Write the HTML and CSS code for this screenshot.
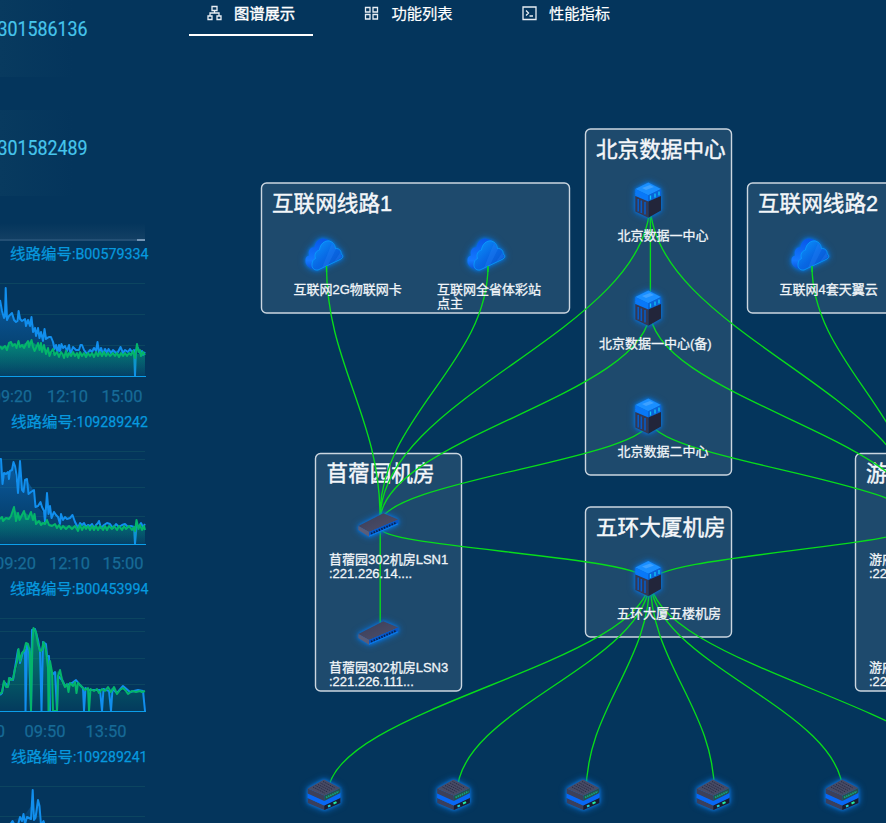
FILE: index.html
```html
<!DOCTYPE html>
<html lang="zh-CN">
<head>
<meta charset="utf-8">
<title>图谱展示</title>
<link rel="stylesheet" href="styles.css">
</head>
<body>
<div class="page">
  <aside class="sidebar">
    <div class="stat stat-first"><svg width="100" height="24"><text class="num" x="-2.5" y="22" textLength="90" lengthAdjust="spacingAndGlyphs">301586136</text></svg></div>
    <div class="stat"><svg width="100" height="24"><text class="num" x="-2.5" y="22" textLength="90" lengthAdjust="spacingAndGlyphs">301582489</text></svg></div>
    <div class="scroller"><i></i></div>

    <svg class="chart" width="150" height="167" viewBox="0 241 150 167">
      <defs>
        <linearGradient id="blueFill" x1="0" y1="0" x2="0" y2="1"><stop offset="0" stop-color="#1080df" stop-opacity=".6"/><stop offset="1" stop-color="#0a5a9c" stop-opacity=".12"/></linearGradient>
        <linearGradient id="greenFill" x1="0" y1="0" x2="0" y2="1"><stop offset="0" stop-color="#04a878" stop-opacity=".7"/><stop offset="1" stop-color="#04a878" stop-opacity=".05"/></linearGradient>
      </defs>
      <text class="line-name" x="10" y="259" textLength="62" lengthAdjust="spacingAndGlyphs">线路编号</text><text class="line-name" x="72" y="259" textLength="76.500" lengthAdjust="spacingAndGlyphs">:B00579334</text>
      <path class="grid" d="M0 283.5H145M0 314.5H145M0 345.5H145"/>
      <path class="area-blue" d="M0 300L4 318L6 288L8 320L12 313L17 322L19 311L22 321L31 319L38 334L44 335L51 337L57 347L66 348L81 352L97 346L110 350L134 351L145 353V376H0Z"/>
      <path class="blue" d="M0 300L2 311L4 318L5 316L5.7 288L7 320L9 316L12 313L14 320L16 322L17.5 321L18.6 311L20 319L22 321L25 319L26 326L28 320L30 326L31.500 317L33 332L35 328L36 336L38 328L39.500 338L41 332L43 341L44.500 329L46 339L49 337L51 337L53 342L54.500 349L56 345L57.500 352L59 345L60 351L61.500 344L63 348L65 346L67 351L69 345L70.500 354L73 347L76 350L79 350L80.500 345L82 345L84 350L87 354L90 350L92 352L94 348L96 351L97.500 342L99 353L101 348L103 354L105 349L107 353L108.500 349L111 353L113 350L116 353L118 352L120.500 347L123 353L125 350L128 352L130 349L132 352L134 350L135 376L136 350L138 348L140 353L142 351L143 355L145 352"/>
      <path class="area-green" d="M0 346L7 346L11 342L18 346L31 341L42 349L52 353L66 354L145 354V376H0Z"/>
      <path class="green" d="M0 346L2 349L5 346L7 350L9 343L11 342L12.500 346L15 344L16.500 348L18.500 341L20 347L22 345L24 348L26 344L28 341L29 347L31.500 340L33 347L34.500 351L36 348L38 343L39.500 350L41 343L42 352L44 345L46 354L48 348L49.500 356L51 352L53 349L54.500 355L57 352L59 357L61 352L62.500 354L64 358L66 351L67.500 357L69 353L71 356L73 352L75 356L77 353L78.500 358L80 352L82 356L84 353L86 357L88 353L90 356L92 353L94 357L96 352L98 356L100 352L102 356L104 352L106 356L108 353L110 356L113 353L115 356L117 353L119 357L121 353L123 356L125 353L127 356L129 353L131 355L133 351L135 358L137 344L138.500 352L140 350L141 356L143 352L145 355"/>
      <path class="axis" d="M0 376.500H146"/>
      <text class="tick" x="-8" y="401.800" textLength="40" lengthAdjust="spacingAndGlyphs">09:20</text><text class="tick" x="47" y="401.800" textLength="41" lengthAdjust="spacingAndGlyphs">12:10</text><text class="tick" x="101.500" y="401.800" textLength="41" lengthAdjust="spacingAndGlyphs">15:00</text>
    </svg>

    <svg class="chart" width="150" height="168" viewBox="0 408 150 168">
      <text class="line-name" x="11" y="426.500" textLength="62" lengthAdjust="spacingAndGlyphs">线路编号</text><text class="line-name" x="73" y="426.500" textLength="75" lengthAdjust="spacingAndGlyphs">:109289242</text>
      <path class="grid" d="M0 451.500H145M0 459.500H145M0 487.500H145M0 516.500H145"/>
      <path class="area-blue" d="M0 459L3 483L5 472L9 478L13 463L18 492L20 461L23 491L26 479L34 491L36 506L45 514L47 493L50 512L62 518L73 518L80 526L145 527V544H0Z"/>
      <path class="blue" d="M0 459L1 459L2.500 484L4 473L6 474L8 472L9 479L10 471L12 470L13.500 462L15 466L16.500 475L18 493L20 461L22 490L23.500 492L25 480L27 479L28.500 494L31 492L34 490L35.500 507L38 506L40.500 502L42 507L44 511L45 522L47 493L48.500 514L50 506L51.500 518L54 512L56 515L58 517L60 524L61 514L63 520L65 517L67 519L70 518L72.500 515L75 522L78 528L80 523L82 525L84 523L86 527L88 525L90 526L92 524L94 528L96 525L98 523L99 521L101 528L104 525L107 523L110 524L113 528L116 524L119 527L122 525L125 524L128 527L131 526L134 527L135 544L136.500 527L139 526L141 523L143 527L145 524"/>
      <path class="area-green" d="M0 518L11 517L14 509L20 516L24 512L36 520L54 525L145 528V544H0Z"/>
      <path class="green" d="M0 519L2 517L3 521L6 518L9 519L11 516L14 507L16 521L18 513L19.500 520L22 515L24 511L26 519L28 519L31 512L33 520L34.500 514L36 524L39 521L41 525L43 523L45 524L47 520L49 525L52 526L55 524L57 528L59 525L61 529L63 526L66 529L69 526L72 529L75 526L78 531L80 525L82 530L84 526L86 529L88 526L90 530L92 526L94 530L96 526L98 530L100 526L103 530L105 526L107 530L109 526L112 529L114 526L117 530L119 526L122 530L124 526L126 529L129 526L132 530L134 527L135 531L136.500 520L138.500 529L140 525L142 530L144 526L145 530"/>
      <path class="axis" d="M0 544.500H146"/>
      <text class="tick" x="-5" y="569.300" textLength="41" lengthAdjust="spacingAndGlyphs">09:20</text><text class="tick" x="49" y="569.300" textLength="41" lengthAdjust="spacingAndGlyphs">12:10</text><text class="tick" x="102.500" y="569.300" textLength="41" lengthAdjust="spacingAndGlyphs">15:00</text>
    </svg>

    <svg class="chart" width="150" height="167" viewBox="0 576 150 167">
      <text class="line-name" x="10" y="594" textLength="62" lengthAdjust="spacingAndGlyphs">线路编号</text><text class="line-name" x="72" y="594" textLength="76.500" lengthAdjust="spacingAndGlyphs">:B00453994</text>
      <path class="grid" d="M0 618.500H145M0 631.500H145M0 658.500H145M0 684.500H145"/>
      <path class="area-green" d="M0 694L8 685L13 679L20 658L26 645L31 648L34 629L40 651L44 641L52 673L60 671L66 685L80 686L94 691L145 692V711H0Z"/>
      <path class="blue" d="M0 695L2 693L4 682L8 686L10 678L13 680L15 668L18 650L20 663L23 652L25 650L25.500 711L27 644L29 650L31 711L32 630L35 629L38 640L40 651L41.500 711L43 642L46 644L47 656L49 656L50 711M52 675L55 672L57 711L58 676L62 680L65 686L72 683L76 680L80 685L83 688L84 711L85.500 688L89 690L100 690L102 711L103.500 689L109 691L111 711L112.500 689L117 693L123 686L130 692L138 690L143 691L145 711"/>
      <path class="green" d="M0 694L2 692L4 681L6 687L8 687L9 678L11 680L13 679L15 669L17 662L18.500 649L20 661L22 653L24 651L26 643L28 644L30 652L31 711L32.500 641L33.500 628L36 632L38 644L40 651L42 650L43.500 642L46 650L48 668L48.500 711L50 661L52 672L53 711H57L58 676L60 670L62 680L65 687L67 684L68.500 692L70 683L73 686L75 682L76.500 693L78 683L82 687L85 690L88 688L89 711L90.500 689L94 691L97 689L99 693L102 689L105 691L108 687L111 692L114 687L117 694L120 690L123 688L126 691L128 694L132 691L136 692L140 691L142 692L145 691"/>
      <path class="axis" d="M0 711.500H146"/>
      <text class="tick" x="-36" y="737" textLength="41" lengthAdjust="spacingAndGlyphs">05:50</text><text class="tick" x="24.500" y="737" textLength="41" lengthAdjust="spacingAndGlyphs">09:50</text><text class="tick" x="85.500" y="737" textLength="41" lengthAdjust="spacingAndGlyphs">13:50</text>
    </svg>

    <svg class="chart" width="150" height="80" viewBox="0 743 150 80">
      <text class="line-name" x="11" y="761.500" textLength="62" lengthAdjust="spacingAndGlyphs">线路编号</text><text class="line-name" x="73" y="761.500" textLength="74.500" lengthAdjust="spacingAndGlyphs">:109289241</text>
      <path class="grid" d="M0 786.500H145M0 816.500H145"/>
      <path class="area-blue" d="M10 824L13 820L24 816L32 805L33 790L35 820L38 800L40 823Z"/>
      <path class="blue" d="M10 825L12.500 821L15 826L18 825L20 817L22 821L23.500 814L25 824L27 817L29 818L31 819L32.700 790L34 820L35.500 818L38 800L39.500 806L41 825L43.500 821L45 826"/>
    </svg>
  </aside>

  <main class="main">
    <nav class="tabs">
      <a class="tab active"><svg class="ico" width="15" height="16" viewBox="0 0 15 16"><path d="M5 1.500h5v4H5zM1 11h4v3.500H1zM10 11h4v3.500h-4zM7.500 5.500V8M3 11V8h9v3"/></svg><span>图谱展示</span></a>
      <a class="tab"><svg class="ico" width="15" height="16" viewBox="0 0 15 16"><path d="M1.500 2.500h4.500v4.500H1.500zM9 2.500h4.500v4.500H9zM1.500 9.500h4.500V14H1.500zM9 9.500h4.500V14H9z"/></svg><span>功能列表</span></a>
      <a class="tab"><svg class="ico" width="15" height="16" viewBox="0 0 15 16"><path d="M1 2h13v12.500H1zM4 5.500l2.500 2.500L4 10.500M7.500 11h3.500"/></svg><span>性能指标</span></a>
    </nav>

    <svg class="topology" width="697" height="787" viewBox="189 36 697 787">
      <defs>
        <linearGradient id="cloudFace" x1="0" y1="0" x2="1" y2="1"><stop offset="0" stop-color="#0a98ff"/><stop offset=".5" stop-color="#0868e4"/><stop offset="1" stop-color="#0b50c8"/></linearGradient>
        <linearGradient id="cloudSide" x1="0" y1="0" x2="0" y2="1"><stop offset="0" stop-color="#0757e8"/><stop offset=".7" stop-color="#1479ff"/><stop offset="1" stop-color="#0c50d4"/></linearGradient>
        <linearGradient id="deckTop" x1="0" y1="0" x2="1" y2="1"><stop offset="0" stop-color="#3a3d58"/><stop offset="1" stop-color="#50506a"/></linearGradient>
        <g id="cloud" class="glow">
          <path fill="url(#cloudSide)" d="M10 32.500C6 31 1 29 1.500 23.500C1.500 20 3 19 5 18.500C3.500 13 7 10 10.500 10C11 5 15 1 19.500 1.500C24 2 27 4 28 6L14 33Z"/>
          <path fill="url(#cloudFace)" stroke="#08a5ff" stroke-width=".7" d="M14 33C10 33.500 7.500 31 8 27C8.300 24 9.500 22.500 11.500 21.500C10 17 12 14 15.500 13C16 7 21 3 25.500 4C29 5 31 7.500 31.500 11.500C35 11 37.500 14 37 16.500C40 19 39 21 36 22.500Z"/>
          <path fill="#2f8cff" opacity=".25" d="M28 6L32 12L24 28L18 31ZM36 16L38 20L30 25Z"/>
        </g>
        <g id="rack" class="glow">
          <path fill="#1a8fff" d="M14.300 .5L27 7L14.300 13.200L1.300 7Z"/>
          <path fill="#0878f8" d="M1.300 7L14.300 13.200V19.500L1.300 14Z"/><path fill="#0a63d8" d="M27 7L14.300 13.200V19.500L27 14Z"/>
          <path fill="#62b3ff" opacity=".5" d="M8 6L16 3L20 5L12 8Z"/>
          <path fill="#343854" d="M1.300 14L14.300 19.500V35.700L1.300 29.500Z"/><path fill="#22253a" d="M14.300 19.500L27 14V28.500L14.300 35.700Z"/>
          <path stroke="#075bc5" stroke-width="1.600" d="M4.200 17V29.500M7.300 18.500V31M11 20V32.500"/>
          <path stroke="#11c6f5" stroke-width="1.300" d="M16.500 13.500V17.500M21 11.500V15.500M25 9.500V13.500"/>
          <path stroke="#1479ec" d="M1.300 11.500L6 13.500"/>
        </g>
        <g id="switch" class="glow">
          <path fill="url(#deckTop)" d="M2.300 15L27.300 2.300L42.300 8.500L13 21Z"/>
          <path fill="#5b5d78" d="M2.300 15L13 21V25.700L2.300 19Z"/><path fill="#0755c8" d="M13 21L42.300 8.500V13L13 25.700Z"/>
          <path stroke="#072451" stroke-width="2" stroke-dasharray="1.600 1.200" d="M15 22.700L40.500 11.500"/>
          <path stroke="#0d94ff" stroke-width=".7" d="M13 25.300L42 12.800"/>
        </g>
        <g id="device" class="glow">
          <path fill="#3a3f5c" d="M1.700 20L18.300 27.500L34.300 19.500V25L18.300 32L1.700 25Z"/><path fill="#171d30" d="M18.300 27L34.300 19.500V25L18.300 32Z"/>
          <path fill="#0868f5" d="M1.700 15L18.300 22L34.300 14V20L18.300 27.500L1.700 20Z"/>
          <path fill="#3d4059" d="M1.700 10.500V15.500L18.300 23V17.500Z"/><path fill="#24504f" d="M18.300 17.500L34.300 10V15L18.300 23Z"/>
          <path fill="#484b65" d="M18 1.500L34.300 10L18.300 17.500L1.700 10.500Z"/>
          <path stroke="#252a43" stroke-width="1" stroke-dasharray="1.200 .8" d="M17 3.500L29 10M14.500 5L26.500 11.500M12 6.500L24 12.500M9.500 7.500L21.500 14M7 9L18.500 15"/>
          <path stroke="#10a878" stroke-width="1.800" stroke-dasharray="1.500 .8" d="M20 19.500L33 13.500"/>
          <path stroke="#20cfe0" stroke-width="2" d="M22 28.500L24.500 27.400"/><path stroke="#28eda0" stroke-width="2" d="M27.500 25.500L30.500 24.200"/>
        </g>
      </defs>

      <g class="groups">
        <rect x="261.500" y="183" width="308" height="130" rx="5"/>
        <rect x="585.500" y="129" width="146" height="346" rx="5"/>
        <rect x="747.500" y="183" width="308" height="130" rx="5"/>
        <rect x="315.500" y="453.500" width="146" height="237.500" rx="5"/>
        <rect x="585.500" y="507" width="146" height="130" rx="5"/>
        <rect x="855.500" y="453.500" width="146" height="237.500" rx="5"/>
      </g>
      <g class="titles">
        <text x="272" y="211">互联网线路1</text>
        <text x="596" y="157">北京数据中心</text>
        <text x="758" y="211">互联网线路2</text>
        <text x="326.500" y="481">苜蓿园机房</text>
        <text x="596" y="535">五环大厦机房</text>
        <text x="866" y="481">游府西街</text>
      </g>
      <g class="edges">
        <path d="M326.500 266C326.500 363 380 417 380 516M488 266C488 363 380 417 380 516"/>
        <path d="M650 202C650 331 380 395 380 520M650 310C650 396 380 438 380 522M650 420C650 459 380 481 380 524"/>
        <path d="M650.400 202V310M380.200 524V632"/>
        <path d="M812 266C812 363 920 417 920 524M650 202C650 331 920 395 920 520M650 310C650 396 920 438 920 522M650 420C650 459 920 481 920 524"/>
        <path d="M380 528C380 548 650 556 650 582M920 524C920 546 650 556 650 582"/>
        <path d="M650 578C650 664 328 708 328 794M650 578C650 664 457 708 457 794M650 578C650 664 586 708 586 794M650 578C650 664 714.500 708 714.500 794M650 578C650 664 843 708 843 794M650 578C650 667 974 711 974 800"/>
      </g>
      <use href="#cloud" x="304" y="237"/><use href="#cloud" x="466" y="237"/><use href="#cloud" x="790" y="237"/>
      <use href="#rack" x="634" y="182"/><use href="#rack" x="634" y="290"/><use href="#rack" x="634" y="398"/><use href="#rack" x="634" y="560.500"/>
      <use href="#switch" x="356" y="511"/><use href="#switch" x="356" y="619"/>
      <use href="#device" x="306" y="778"/><use href="#device" x="435.500" y="778"/><use href="#device" x="565" y="778"/><use href="#device" x="695" y="778"/><use href="#device" x="824" y="778"/>
      <path class="edge-tip" d="M326.500 266V272M488 266V272M812 266V272"/>
      <g class="labels">
        <text x="293.500" y="294">互联网2G物联网卡</text>
        <text x="437" y="294">互联网全省体彩站<tspan x="437" dy="14">点主</tspan></text>
        <text x="779.500" y="294">互联网4套天翼云</text>
        <text x="617.500" y="240">北京数据一中心</text>
        <text x="599" y="348">北京数据一中心(备)</text>
        <text x="617.500" y="456">北京数据二中心</text>
        <text x="617" y="618">五环大厦五楼机房</text>
        <text x="329" y="564">苜蓿园302机房LSN1<tspan x="329" dy="14">:221.226.14....</tspan></text>
        <text x="329" y="672">苜蓿园302机房LSN3<tspan x="329" dy="14">:221.226.111...</tspan></text>
        <text x="869" y="564">游府<tspan x="869" dy="14">:221.226</tspan></text>
        <text x="869" y="672">游府<tspan x="869" dy="14">:221.226</tspan></text>
      </g>
    </svg>
  </main>
</div>
</body>
</html>
```

FILE: styles.css
```css
* { box-sizing: border-box; }
body { margin: 0; background: #04355c; overflow: hidden; font-family: "Liberation Sans", "Noto Sans CJK SC", sans-serif; }
svg { display: block; }
.page { display: flex; width: 886px; height: 823px; overflow: hidden; }

.sidebar { width: 150px; margin-right: 39px; flex: none; overflow: hidden; }
.stat { width: 73px; height: 86px; margin-bottom: 27px; padding-top: 22.5px; background: linear-gradient(90deg, #083a5f, #04355c); }
.stat svg { overflow: visible; }
.stat-first { height: 77px; padding-top: 14px; margin-bottom: 33px; }
.num { font: 20.5px Roboto, sans-serif; fill: #46c5ec; stroke: #46c5ec; stroke-width: .2px; }
.scroller { display: flex; justify-content: flex-end; align-items: flex-end; width: 145px; height: 18px; border-bottom: 2px solid #234f74; background: linear-gradient(#04355c, #123f64); }
.scroller i { width: 8px; height: 2px; margin-bottom: -2px; background: #7395b5; }

.chart { overflow: hidden; }
.line-name { font: 15px Roboto, "Noto Sans CJK SC", sans-serif; fill: #0799df; stroke: #0799df; stroke-width: .25px; }
.tick { font: 17px Roboto, sans-serif; fill: #176b97; stroke: #176b97; stroke-width: .25px; }
.grid { fill: none; stroke: #0c4560; stroke-width: 1; }
.axis { fill: none; stroke: #0c9eea; stroke-width: 1; }
.blue, .green { fill: none; stroke-width: 2; stroke-linejoin: round; }
.blue { stroke: #118eed; }
.green { stroke: #04b56b; }
.area-blue { fill: url(#blueFill); }
.area-green { fill: url(#greenFill); }

.main { width: 697px; flex: none; }
.tabs { display: flex; gap: 33.5px; height: 36px; }
.tab { display: flex; justify-content: center; width: 124px; height: 36px; padding-bottom: 8px; color: #fff; font-size: 15.3px; line-height: 27px; -webkit-text-stroke: .2px #fff; border-bottom: 2px solid transparent; }
.tab.active { border-bottom-color: #fff; -webkit-text-stroke-width: .4px; }
.ico { margin: 5px 12px 0 0; fill: none; stroke: #e8eef4; stroke-width: 1.3; }

.topology { overflow: hidden; }
.groups rect { fill: #fff; fill-opacity: .105; stroke: #cbd6e0; stroke-width: 1.4; }
.titles text { font-size: 21.6px; fill: #f4f7fa; stroke: #f4f7fa; stroke-width: .45px; }
.labels text { font-size: 13px; fill: #f0f4f8; stroke: #f0f4f8; stroke-width: .3px; }
.edges path, .edge-tip { fill: none; stroke: #08dc1b; stroke-width: 1.35; }
.glow { filter: drop-shadow(0 0 1.5px #0872da) drop-shadow(0 0 3px #0872da); }
```
